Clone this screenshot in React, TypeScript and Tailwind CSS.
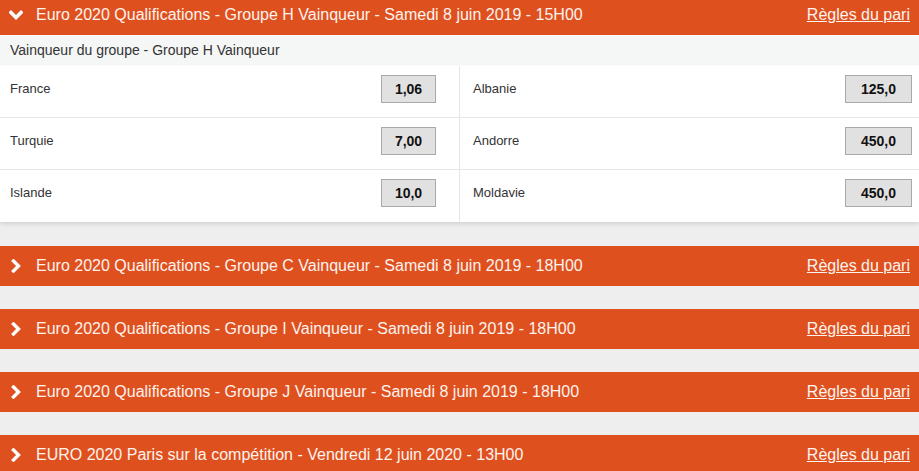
import React from "react";

const ORANGE = "bg-[#df501f]";

function ChevronDown() {
  return (
    <svg width="14" height="10" viewBox="0 0 14 10" className="shrink-0">
      <path d="M2 2.5 L7 7.5 L12 2.5" fill="none" stroke="white" strokeWidth="3.4" strokeLinecap="square" strokeLinejoin="miter" />
    </svg>
  );
}

function ChevronRight() {
  return (
    <svg width="10" height="14" viewBox="0 0 10 14" className="shrink-0">
      <path d="M2.5 2 L7.5 7 L2.5 12" fill="none" stroke="white" strokeWidth="3.4" strokeLinecap="square" strokeLinejoin="miter" />
    </svg>
  );
}

function Header({ title, open }: { title: string; open?: boolean }) {
  return (
    <div className={`${ORANGE} h-[40px] flex items-center text-white text-[16px]`}>
      <div className={open ? "w-[36px] pl-[9px] flex items-center" : "w-[36px] pl-[11px] flex items-center"}>
        {open ? <ChevronDown /> : <ChevronRight />}
      </div>
      <div className="flex-1 whitespace-nowrap text-[#fdf3ee]">{title}</div>
      <a className="underline pr-[9px] whitespace-nowrap text-[#fdf3ee]">Règles du pari</a>
    </div>
  );
}

function Cell({ name, odd, right, last }: { name: string; odd: string; right?: boolean; last?: boolean }) {
  return (
    <div
      className={`flex items-center pt-[9px] ${last ? "pb-[15px]" : "pb-[14px]"} ${right ? "flex-1 pr-[7px] pl-[13px]" : "w-[460px] pl-[10px] pr-[23px] border-r border-[#e6e6e6]"}`}
    >
      <div className="flex-1 text-[13px] text-[#333]">{name}</div>
      <div
        className={`${right ? "w-[67px]" : "w-[55px]"} h-[28px] bg-[#e1e1e1] border border-[#a9a9a9] flex items-center justify-center text-[14px] font-bold text-[#111]`}
      >
        {odd}
      </div>
    </div>
  );
}

export default function App() {
  const rows: [string, string, string, string][] = [
    ["France", "1,06", "Albanie", "125,0"],
    ["Turquie", "7,00", "Andorre", "450,0"],
    ["Islande", "10,0", "Moldavie", "450,0"],
  ];
  return (
    <div className="w-[919px] h-[471px] overflow-hidden bg-[#eeeeee]" style={{ fontFamily: '"Liberation Sans", Arial, sans-serif' }}>
      <div className="-mt-[5px]">
        <Header open title="Euro 2020 Qualifications - Groupe H Vainqueur - Samedi 8 juin 2019 - 15H00" />
        <div className="bg-white shadow-[0_2px_4px_rgba(0,0,0,0.12)]">
          <div className="h-[31px] bg-[#f5f6f6] border-t border-[#fbfbfb] border-b border-[#e2e2e2] flex items-center pl-[10px] text-[14px] text-[#333]">
            Vainqueur du groupe - Groupe H Vainqueur
          </div>
          {rows.map((r, i) => (
            <div key={i} className={`flex ${i < rows.length - 1 ? "border-b border-[#e6e6e6]" : ""}`}>
              <Cell name={r[0]} odd={r[1]} last={i === rows.length - 1} />
              <Cell name={r[2]} odd={r[3]} right last={i === rows.length - 1} />
            </div>
          ))}
        </div>
        <div className="flex flex-col gap-[23px] mt-[24px]">
          <Header title="Euro 2020 Qualifications - Groupe C Vainqueur - Samedi 8 juin 2019 - 18H00" />
          <Header title="Euro 2020 Qualifications - Groupe I Vainqueur - Samedi 8 juin 2019 - 18H00" />
          <Header title="Euro 2020 Qualifications - Groupe J Vainqueur - Samedi 8 juin 2019 - 18H00" />
          <Header title="EURO 2020 Paris sur la compétition - Vendredi 12 juin 2020 - 13H00" />
        </div>
      </div>
    </div>
  );
}
